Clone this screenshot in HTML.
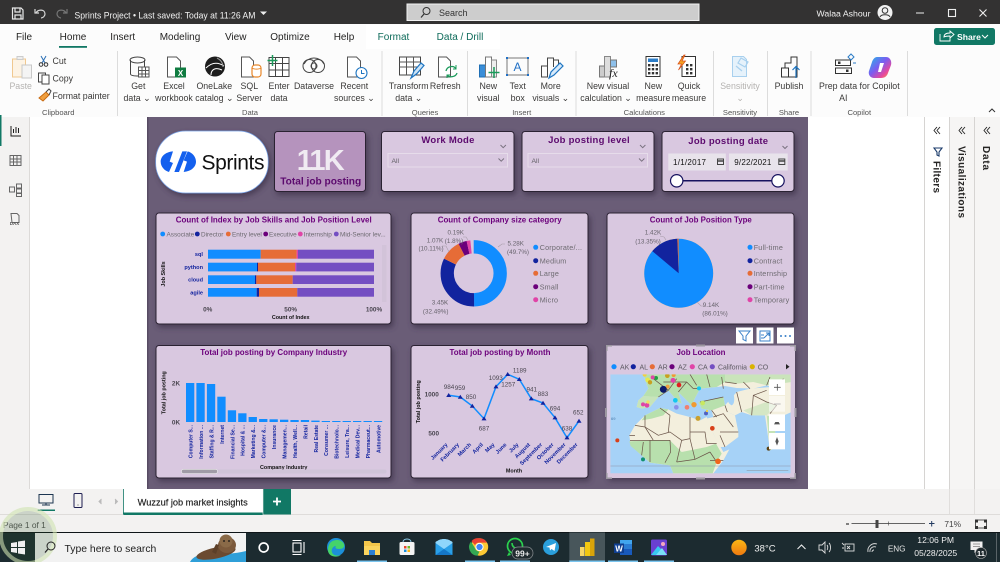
<!DOCTYPE html>
<html><head><meta charset="utf-8"><title>Sprints Project</title>
<style>
html,body{margin:0;padding:0;width:1000px;height:562px;overflow:hidden;background:#fff}
svg{display:block;font-family:"Liberation Sans",sans-serif}
.m{text-anchor:middle}.e{text-anchor:end}
.r{font-size:8.8px;fill:#3b3a39;text-anchor:middle}
.g{font-size:7.6px;fill:#555;text-anchor:middle}
.tab{font-size:10px;fill:#252423;text-anchor:middle}
.t{font-size:8px;font-weight:bold;fill:#6b007b;text-anchor:middle}
.st{font-size:9.5px;font-weight:bold;fill:#5c0a6e;text-anchor:middle;letter-spacing:.25px}
.lg{font-size:6.4px;fill:#6d6a70}
.lg2{font-size:7.2px;fill:#6d6a70;letter-spacing:.2px}
.lg3{font-size:7px;fill:#5d5a62}
.dl{font-size:6.3px;fill:#67636c;text-anchor:middle}
.ax{font-size:5.6px;font-weight:bold;fill:#12239e}
.ax2{font-size:5.1px;font-weight:bold;fill:#12239e}
.at{font-size:5.4px;font-weight:bold;fill:#111}
.vl{font-size:6.4px;fill:#4a4650;text-anchor:middle;font-weight:bold}
.tb{font-size:9.5px;fill:#eee}
</style></head><body>
<svg width="1000" height="562" viewBox="0 0 1000 562" xmlns="http://www.w3.org/2000/svg">
<defs>
<filter id="s" x="-10%" y="-10%" width="125%" height="130%"><feDropShadow dx="2" dy="3" stdDeviation="3" flood-color="#3c3049" flood-opacity=".75"/></filter>
<clipPath id="mc"><rect x="1" y="7" width="541" height="297"/></clipPath>
<linearGradient id="cp" x1="0" y1="0" x2="1" y2="1"><stop offset="0" stop-color="#22b8e8"/><stop offset=".45" stop-color="#7b5cf0"/><stop offset=".75" stop-color="#e8489c"/><stop offset="1" stop-color="#f7b32b"/></linearGradient>
<linearGradient id="sun" x1="0" y1="0" x2="0" y2="1"><stop offset="0" stop-color="#fbb615"/><stop offset="1" stop-color="#f07a10"/></linearGradient>
</defs>

<!-- base -->
<rect width="1000" height="562" fill="#fff"/>
<rect y="0" width="1000" height="24.5" fill="#333232"/>
<rect y="24" width="1000" height="93" fill="#fcfcfc"/>
<rect x="366" y="25" width="58" height="24" fill="#fff"/><rect x="424" y="25" width="76" height="24" fill="#fff"/>
<rect y="117" width="30" height="372" fill="#f3f2f1"/>
<rect x="29" y="117" width="1" height="372" fill="#dcdad8"/>
<rect x="0" y="115" width="1.5" height="31" fill="#117865"/>
<rect x="925" y="117" width="75" height="372" fill="#f6f5f4"/>
<rect x="925" y="117" width="24" height="372" fill="#fff"/>
<rect x="924" y="117" width="1" height="372" fill="#d6d4d2"/><rect x="949" y="117" width="1" height="372" fill="#d6d4d2"/><rect x="974" y="117" width="1" height="372" fill="#d6d4d2"/>
<rect y="489" width="1000" height="43" fill="#f3f2f1"/>
<rect y="514" width="1000" height="1" fill="#dedcda"/>

<!-- title bar -->
<g fill="none" stroke="#e8e8e8" stroke-width="1.2"><path d="M12.5 8h8.5l2 2v9h-10.500z"/><path d="M15 8v4h5V8M15 19v-4h6v4"/></g>
<path d="M35 9v4h4M36 13c2-4 9-4 9 1 0 2-2 4-4 4" fill="none" stroke="#d8d8d8" stroke-width="1.2"/>
<path d="M67 9v4h-4M66 13c-2-4-9-4-9 1 0 2 2 4 4 4" fill="none" stroke="#777" stroke-width="1.2"/>
<text x="74.500" y="18.500" font-size="8.800" fill="#f2f2f2" textLength="181" lengthAdjust="spacingAndGlyphs">Sprints Project  •  Last saved: Today at 11:26 AM</text>
<path d="M260 11.500h7l-3.500 3.500z" fill="#eee"/>
<rect x="407" y="4" width="292" height="16.500" fill="#cdcdcd" stroke="#f2f2f2" stroke-width="1"/>
<circle cx="426.500" cy="11" r="3.500" fill="none" stroke="#333" stroke-width="1"/><path d="M424 14l-3 3.500" stroke="#333" stroke-width="1.200"/>
<text x="439" y="16" font-size="9" fill="#333">Search</text>
<text x="816.500" y="16.500" font-size="8.600" fill="#f4f4f4" textLength="54" lengthAdjust="spacingAndGlyphs">Walaa Ashour</text>
<circle cx="885" cy="12.500" r="7.500" fill="#f2f2f2"/><circle cx="885" cy="10.500" r="2.800" fill="none" stroke="#333"/><path d="M880 17c1-3 9-3 10 0" fill="none" stroke="#333"/>
<path d="M916 13h8" stroke="#eee"/><rect x="948.500" y="9.500" width="7" height="7" fill="none" stroke="#eee" stroke-width="1.100"/><path d="M979.500 9.500l7 7M986.500 9.500l-7 7" stroke="#eee" stroke-width="1.100"/>

<!-- tabs -->
<text class="tab" x="24" y="40">File</text><text class="tab" x="73" y="40">Home</text><text class="tab" x="122.700" y="40">Insert</text><text class="tab" x="180" y="40">Modeling</text><text class="tab" x="235.700" y="40">View</text><text class="tab" x="290" y="40">Optimize</text><text class="tab" x="344" y="40">Help</text>
<text class="tab" x="393.500" y="40" style="fill:#0e6b5a">Format</text><text class="tab" x="460" y="40" style="fill:#0e6b5a">Data / Drill</text>
<rect x="59" y="46" width="28" height="1.800" fill="#117865"/>
<rect x="934" y="28" width="61" height="17" rx="2.500" fill="#117865"/>
<path d="M940 34v7h10v-3M944 37c0-3 3-4 6-4v-2l4 3.500-4 3.500v-2c-2 0-4 0-6 1z" fill="none" stroke="#fff" stroke-width=".9"/>
<text x="957" y="40" font-size="8.600" font-weight="bold" fill="#fff">Share</text><path d="M982 35l3 3 3-3" fill="none" stroke="#fff"/>

<!-- separators -->
<g fill="#dcdcdc"><rect x="117" y="51" width="1" height="65"/><rect x="381.500" y="51" width="1" height="65"/><rect x="467" y="51" width="1" height="65"/><rect x="575.500" y="51" width="1" height="65"/><rect x="713" y="51" width="1" height="65"/><rect x="767" y="51" width="1" height="65"/><rect x="810.500" y="51" width="1" height="65"/><rect x="907" y="51" width="1" height="65"/></g>

<!-- ribbon labels -->
<text class="r" x="20.700" y="89" style="fill:#b5b3b1">Paste</text>
<text class="r" x="52.500" y="64" style="text-anchor:start">Cut</text><text class="r" x="52.500" y="81.500" style="text-anchor:start">Copy</text><text class="r" x="52.500" y="99" style="text-anchor:start">Format painter</text>
<text class="r" x="138.300" y="89">Get</text><text class="r" x="137" y="101">data ⌄</text>
<text class="r" x="174" y="89">Excel</text><text class="r" x="174" y="101">workbook</text>
<text class="r" x="214.300" y="89">OneLake</text><text class="r" x="214.300" y="101">catalog ⌄</text>
<text class="r" x="249.300" y="89">SQL</text><text class="r" x="249.300" y="101">Server</text>
<text class="r" x="279" y="89">Enter</text><text class="r" x="279" y="101">data</text>
<text class="r" x="314" y="89">Dataverse</text>
<text class="r" x="354.300" y="89">Recent</text><text class="r" x="354.300" y="101">sources ⌄</text>
<text class="r" x="408.700" y="89">Transform</text><text class="r" x="408.700" y="101">data ⌄</text>
<text class="r" x="445.300" y="89">Refresh</text>
<text class="r" x="488.300" y="89">New</text><text class="r" x="488.300" y="101">visual</text>
<text class="r" x="517.700" y="89">Text</text><text class="r" x="517.700" y="101">box</text>
<text class="r" x="550.700" y="89">More</text><text class="r" x="550.700" y="101">visuals ⌄</text>
<text class="r" x="608" y="89">New visual</text><text class="r" x="606" y="101">calculation ⌄</text>
<text class="r" x="653.300" y="89">New</text><text class="r" x="653.300" y="101">measure</text>
<text class="r" x="689" y="89">Quick</text><text class="r" x="689" y="101">measure</text>
<text class="r" x="740" y="89" style="fill:#b5b3b1">Sensitivity</text><text class="r" x="740" y="101" style="fill:#b5b3b1">⌄</text>
<text class="r" x="789" y="89">Publish</text>
<text class="r" x="859.300" y="89">Prep data for Copilot</text><text class="r" x="843.300" y="101">AI</text>
<text class="g" x="58.300" y="115">Clipboard</text><text class="g" x="250" y="115">Data</text><text class="g" x="425" y="115">Queries</text><text class="g" x="521.700" y="115">Insert</text><text class="g" x="644.300" y="115">Calculations</text><text class="g" x="740" y="115">Sensitivity</text><text class="g" x="789" y="115">Share</text><text class="g" x="859.300" y="115">Copilot</text>
<path d="M989 112l3-3 3 3" fill="none" stroke="#333"/>

<!-- ribbon icons -->
<g fill="none" stroke-width="1">
<rect x="12.500" y="59" width="13" height="18" fill="#fdf3e4" stroke="#f0c890"/><rect x="17" y="56.500" width="6" height="3" fill="#eee" stroke="#ccc"/><rect x="22" y="65" width="9.500" height="13" fill="#f4f4f4" stroke="#c8c8c8"/>
<path d="M41 56l4 7M46 56l-4 7" stroke="#2a6fb5"/><circle cx="41" cy="64.500" r="1.800" stroke="#333"/><circle cx="46" cy="64.500" r="1.800" stroke="#333"/>
<rect x="38.500" y="73" width="7" height="9" stroke="#444"/><rect x="42" y="75" width="7" height="9" fill="#fff" stroke="#444"/>
<path d="M39 98l7-6 3 3-6 6z" fill="#f0a040" stroke="#c86a10"/><path d="M46 92l3-3 2 2-2 4" stroke="#444"/>
<path d="M130.500 60v14c0 2.500 12 2.500 14 1V60" stroke="#444"/><ellipse cx="137.500" cy="60" rx="7.500" ry="3" stroke="#444"/><rect x="138.500" y="67" width="10.500" height="10" fill="#fff" stroke="#555"/><path d="M138.500 70.500h10.500M138.500 74h10.500M142 67v10M145.500 67v10" stroke="#555"/>
<path d="M167.500 57h9l4 4v16h-13z" fill="#fff" stroke="#555"/><rect x="175" y="67.500" width="11" height="10" fill="#107c41" stroke="none"/><text x="180.500" y="76" font-size="8" font-weight="bold" fill="#fff" text-anchor="middle">X</text>
<circle cx="215" cy="66.500" r="10" fill="#1d1d1d"/><path d="M206 68c6-6 12-6 18-2M211 75c0-6 5-8 11-5" stroke="#fff"/><path d="M217 58c4 2 6 5 6 9" stroke="#999"/>
<path d="M241.500 57h8l4 4v16h-12z" fill="#fff" stroke="#555"/><rect x="252" y="65" width="9" height="12" rx="3" fill="#fff" stroke="#e8872a" stroke-width="1.200"/><path d="M252 68c2 1.500 7 1.500 9 0" stroke="#e8872a"/>
<rect x="269" y="57.500" width="20" height="19" stroke="#444" fill="#fff"/><path d="M269 63.500h20M269 70h20M275.500 57.500v19M282.500 57.500v19" stroke="#444"/><path d="M272.500 55v11M267.500 60.500h10" stroke="#1a9a5a" stroke-width="1.500"/>
<circle cx="309.500" cy="66" r="6.500" stroke="#444"/><circle cx="318" cy="66" r="6.500" stroke="#444"/><circle cx="314" cy="66" r="3" stroke="#444"/><path d="M304 64c4-8 16-8 20 0" stroke="#444"/>
<path d="M347.500 57h9l4 4v16h-13z" fill="#fff" stroke="#555"/><circle cx="361.500" cy="73" r="5.500" fill="#fff" stroke="#1f76c2" stroke-width="1.100"/><path d="M361.500 70v3.500h3" stroke="#1f76c2"/>
<rect x="399.500" y="57" width="21" height="18" stroke="#444" fill="#fff"/><path d="M399.500 62h21M399.500 67h21M406.500 57v18M413.500 57v18" stroke="#555"/><path d="M411 78l3-7 7-8 3 2.500-7 8z" fill="#cde4f7" stroke="#1f76c2" stroke-width="1.200"/>
<path d="M438.500 57h8l4 4v16h-12z" fill="#fff" stroke="#555"/><path d="M446 71c1-5 8-6 10-2M457 73c-1 4-8 5-10 2" stroke="#1a9a5a" stroke-width="1.300"/><path d="M456 65v4h-3M447 78v-3h3" stroke="#1a9a5a"/>
<rect x="479.500" y="65" width="6" height="12" fill="#3a8ed8" stroke="#1f6fb5"/><rect x="485.500" y="57" width="6" height="20" fill="#fff" stroke="#777"/><rect x="491.500" y="60" width="5" height="17" fill="#eee" stroke="#888"/><path d="M494 67v11M488.500 72.500h11" stroke="#1a9a5a" stroke-width="1.500"/>
<rect x="507" y="58" width="21" height="17" stroke="#777"/><g fill="#1f6fc5" stroke="none"><rect x="506" y="57" width="2" height="2"/><rect x="527" y="57" width="2" height="2"/><rect x="506" y="74" width="2" height="2"/><rect x="527" y="74" width="2" height="2"/></g><text x="517.500" y="71" font-size="12" fill="#1f6fc5" text-anchor="middle" stroke="none">A</text>
<path d="M541.500 66v11h6V66zM547.500 77V58h6v9M553.500 60h5v5" stroke="#444"/><path d="M549 78l2-6 9-9 3 3-9 9z" fill="#d8eafa" stroke="#1f76c2" stroke-width="1.200"/>
<rect x="599.500" y="66" width="5" height="11" fill="#ccc" stroke="#777"/><rect x="604.500" y="56.500" width="6" height="20.500" fill="#ddd" stroke="#888"/><rect x="610.500" y="60" width="6" height="7" fill="#8ec0ea" stroke="#777"/><text x="609" y="77" font-size="12" font-family="Liberation Serif" font-style="italic" fill="#222" stroke="none">fx</text>
<rect x="646" y="56.500" width="14" height="20" fill="#fff" stroke="#333"/><rect x="648" y="58.500" width="10" height="3.500" fill="#2b7cc7" stroke="none"/><g fill="#333" stroke="none"><rect x="648" y="64" width="2.400" height="2.400"/><rect x="651.800" y="64" width="2.400" height="2.400"/><rect x="655.600" y="64" width="2.400" height="2.400"/><rect x="648" y="68" width="2.400" height="2.400"/><rect x="651.800" y="68" width="2.400" height="2.400"/><rect x="655.600" y="68" width="2.400" height="2.400"/><rect x="648" y="72" width="2.400" height="2.400"/><rect x="651.800" y="72" width="2.400" height="2.400"/><rect x="655.600" y="72" width="2.400" height="2.400"/></g>
<rect x="682" y="56.500" width="13.500" height="20" fill="#fff" stroke="#333"/><g fill="#333" stroke="none"><rect x="686" y="64" width="2.400" height="2.400"/><rect x="690" y="64" width="2.400" height="2.400"/><rect x="686" y="68" width="2.400" height="2.400"/><rect x="690" y="68" width="2.400" height="2.400"/><rect x="686" y="72" width="2.400" height="2.400"/><rect x="690" y="72" width="2.400" height="2.400"/></g><path d="M684 55l-6 9h3.500l-3 6 7-9h-3.500l3-6z" fill="#f5a623" stroke="#d9541e" stroke-width=".8"/>
<path d="M732.500 56.500h11l3 3v17h-14z" fill="#e6f2fb" stroke="#a8d0ee"/><path d="M741 58l7 4-3 5-7-4zM736 66l6 5" stroke="#a8d0ee" stroke-width="1.200"/>
<path d="M781.500 68h7v9h-7zM785 68v-5h6v-6h6v20h-8" stroke="#333"/><path d="M796 78v-11M792.500 70l3.500-3.500 3.500 3.500" stroke="#1f76c2" stroke-width="1.200"/>
<rect x="835.500" y="60" width="15" height="5.500" stroke="#333"/><rect x="835.500" y="68" width="16" height="5.500" stroke="#333"/><rect x="838" y="61.500" width="2.500" height="2.500" fill="#333"/><rect x="846" y="69.500" width="2.500" height="2.500" fill="#333"/><path d="M848 57l3-3 3 3-3 3zM853 63h3" stroke="#2b7cc7"/>
<path d="M877 57h9c4 0 6 4 5 8l-3 8c-1 3-3 5-7 5h-7c-4 0-6-4-5-7l3-9c1-3 3-5 5-5z" fill="url(#cp)" stroke="none"/><path d="M880 63l4 0-3 9h-3z" fill="#fff" stroke="none"/>
</g>

<!-- left pane -->
<g fill="none" stroke="#1c1c1c" stroke-width="1"><path d="M11 126v10h10M13.500 133v-4M16 133v-6M18.500 133v-5"/></g>
<g fill="none" stroke="#666"><rect x="10" y="155.500" width="11" height="10"/><path d="M10 159h11M10 162h11M13.500 155.500v10M17 155.500v10"/><rect x="16.500" y="184" width="5" height="4"/><rect x="16.500" y="189" width="5" height="4"/><rect x="16.500" y="193.500" width="5" height="3"/><rect x="9.500" y="187" width="5" height="5"/><path d="M11 213.500h6l2 2v7h-7z"/></g>
<text x="14.500" y="225" font-size="4.500" fill="#555" text-anchor="middle" font-weight="bold">DAX</text>

<!-- right panes -->
<g fill="none" stroke="#222" stroke-width=".9"><path d="M937 127l-3 3.500 3 3.500M940 127l-3 3.500 3 3.500M962 127l-3 3.500 3 3.500M965 127l-3 3.500 3 3.500M987 127l-3 3.500 3 3.500M990 127l-3 3.500 3 3.500"/><path d="M934 148h8l-3 4v4l-2-1v-3z" stroke="#1a3a6a" stroke-width="1.100"/></g>
<text transform="translate(933.500,161) rotate(90)" font-size="10" font-weight="bold" fill="#252423" textLength="32">Filters</text>
<text transform="translate(958.500,146) rotate(90)" font-size="10" font-weight="bold" fill="#252423" textLength="72">Visualizations</text>
<text transform="translate(983,146) rotate(90)" font-size="10" font-weight="bold" fill="#252423" textLength="24">Data</text>

<!-- canvas -->
<rect x="147" y="117" width="661" height="372" fill="#6a5d77"/>
<rect x="147" y="117" width="1.500" height="372" fill="#574b63"/>

<!-- logo + KPI -->
<rect x="155.700" y="131" width="112.500" height="62" rx="30" fill="#fff" stroke="#7aa4e8" stroke-width=".7" filter="url(#s)"/>
<g transform="translate(145,118) scale(.3333)" fill="#1460ee"><path d="M84 100C60 102 47 116 47 131c0 15 12 28 25 31L84 135l-10-4 10-31z"/><path d="M112 100l14 0-24 62-14 0z"/><path d="M116 162c24-2 37-16 37-31 0-15-12-28-25-31L116 127l10 4-10 31z"/></g>
<text x="201.500" y="169.500" font-size="21" fill="#111" textLength="63">Sprints</text>
<rect x="274.500" y="131.500" width="91" height="60" rx="3" fill="#b593bd" stroke="#2c2233" filter="url(#s)"/>
<text x="320.700" y="170" font-size="29" font-weight="bold" fill="#f0ebf2" text-anchor="middle" textLength="48">11K</text>
<text x="320.700" y="184.500" font-size="10.500" font-weight="bold" fill="#5c0a6e" text-anchor="middle" textLength="81" lengthAdjust="spacingAndGlyphs">Total job posting</text>

<!-- slicers -->
<g filter="url(#s)" fill="#d9c8e0" stroke="#2c2233"><rect x="381.500" y="131.500" width="132.500" height="60" rx="3"/><rect x="522" y="131.500" width="132" height="60" rx="3"/><rect x="662" y="131.500" width="132" height="60" rx="3"/></g>
<text class="st" x="448" y="143">Work Mode</text><text class="st" x="589" y="143">Job posting level</text><text class="st" x="728.300" y="144">Job posting date</text>
<g fill="none"><rect x="388" y="153.500" width="119.500" height="13.500" stroke="#e6dcea"/><rect x="528" y="153.500" width="119.500" height="13.500" stroke="#e6dcea"/>
<path d="M498.500 158.500l2.700 2.700 2.700-2.700M639 158.500l2.700 2.700 2.700-2.700M500.500 145l2.700 2.700 2.700-2.700M640 145l2.700 2.700 2.700-2.700M782.500 146l2.500 2.500 2.500-2.500" stroke="#7a7280"/></g>
<text x="391.500" y="163" font-size="6.800" fill="#605e64">All</text><text x="531.500" y="163" font-size="6.800" fill="#605e64">All</text>
<rect x="668.300" y="153.500" width="57.500" height="17" fill="#e8e3eb"/><rect x="729" y="153.500" width="58.700" height="17" fill="#e8e3eb"/>
<text x="673" y="165" font-size="8" fill="#111" textLength="33">1/1/2017</text><text x="734.300" y="165" font-size="8" fill="#111" textLength="37">9/22/2021</text>
<g fill="none" stroke="#444"><rect x="717.500" y="159" width="6" height="5.500"/><rect x="778.800" y="159" width="6" height="5.500"/><path d="M717.500 161h6M778.800 161h6" stroke-width="1.500"/></g>
<path d="M677 180.800h101" stroke="#17125f" stroke-width="1.500"/>
<circle cx="676.700" cy="180.800" r="6.200" fill="#fff" stroke="#17125f" stroke-width="1.200"/><circle cx="778" cy="180.800" r="6.200" fill="#fff" stroke="#17125f" stroke-width="1.200"/>

<!-- cards -->
<g filter="url(#s)" fill="#d9c8e0" stroke="#2c2233"><rect x="156" y="213" width="235" height="111" rx="3"/><rect x="411" y="213" width="177" height="111" rx="3"/><rect x="607" y="213" width="187" height="111" rx="3"/><rect x="156" y="345.500" width="235" height="132.500" rx="3"/><rect x="411" y="345.500" width="177" height="132.500" rx="3"/></g>
<text class="t" x="273.700" y="222.500" textLength="196" lengthAdjust="spacingAndGlyphs">Count of Index by Job Skills and Job Position Level</text>
<text class="t" x="499.700" y="222.500" textLength="124" lengthAdjust="spacingAndGlyphs">Count of Company size category</text>
<text class="t" x="700.800" y="222.500" textLength="102" lengthAdjust="spacingAndGlyphs">Count of Job Position Type</text>
<text class="t" x="273.700" y="355" textLength="147" lengthAdjust="spacingAndGlyphs">Total job posting by Company Industry</text>
<text class="t" x="500" y="355" textLength="101" lengthAdjust="spacingAndGlyphs">Total job posting by Month</text>

<!-- card 1 -->
<g><circle cx="162.700" cy="234" r="2.400" fill="#118dff"/><circle cx="197.300" cy="234" r="2.400" fill="#12239e"/><circle cx="228.300" cy="234" r="2.400" fill="#e66c37"/><circle cx="265.700" cy="234" r="2.400" fill="#6b007b"/><circle cx="300.300" cy="234" r="2.400" fill="#e044a7"/><circle cx="336.300" cy="234" r="2.400" fill="#744ec2"/></g>
<text class="lg" x="166.500" y="236.300">Associate</text><text class="lg" x="201" y="236.300">Director</text><text class="lg" x="232" y="236.300">Entry level</text><text class="lg" x="269" y="236.300">Executive</text><text class="lg" x="303.700" y="236.300">Internship</text><text class="lg" x="340" y="236.300">Mid-Senior lev...</text>
<g>
<rect x="208" y="249.700" width="52.700" height="9" fill="#118dff"/><rect x="260.700" y="249.700" width="36" height="9" fill="#e66c37"/><rect x="296.700" y="249.700" width="1.300" height="9" fill="#e044a7"/><rect x="298" y="249.700" width="76" height="9" fill="#744ec2"/>
<rect x="208" y="262.700" width="49" height="8.700" fill="#118dff"/><rect x="257" y="262.700" width="1" height="8.700" fill="#12239e"/><rect x="258" y="262.700" width="37" height="8.700" fill="#e66c37"/><rect x="295" y="262.700" width="1.200" height="8.700" fill="#e044a7"/><rect x="296.200" y="262.700" width="77.800" height="8.700" fill="#744ec2"/>
<rect x="208" y="275.300" width="47" height="8.700" fill="#118dff"/><rect x="255" y="275.300" width="1.300" height="8.700" fill="#12239e"/><rect x="256.300" y="275.300" width="36.400" height="8.700" fill="#e66c37"/><rect x="292.700" y="275.300" width="81.300" height="8.700" fill="#744ec2"/>
<rect x="208" y="288" width="48.700" height="8.700" fill="#118dff"/><rect x="256.700" y="288" width="2.300" height="8.700" fill="#12239e"/><rect x="259" y="288" width="38.300" height="8.700" fill="#e66c37"/><rect x="297.300" y="288" width="76.700" height="8.700" fill="#744ec2"/>
</g>
<rect x="382" y="245" width="4.500" height="57" fill="#d2c3d9"/>
<text class="ax e" x="203" y="256">sql</text><text class="ax e" x="203" y="269">python</text><text class="ax e" x="203" y="281.500">cloud</text><text class="ax e" x="203" y="294.500">agile</text>
<text class="at m" transform="translate(165,274) rotate(-90)">Job Skills</text>
<text class="vl" x="207.700" y="311.500">0%</text><text class="vl" x="290.700" y="311.500">50%</text><text class="vl" x="374" y="311.500">100%</text>
<text class="at m" x="290.700" y="319">Count of Index</text>

<!-- donut -->
<g fill="none" stroke-width="13.300" transform="rotate(-90 473.700 273.300)">
<circle cx="473.700" cy="273.300" r="26.500" stroke="#118dff" stroke-dasharray="82.750 166.500"/>
<circle cx="473.700" cy="273.300" r="26.500" stroke="#12239e" stroke-dasharray="54.100 166.500" stroke-dashoffset="-82.750"/>
<circle cx="473.700" cy="273.300" r="26.500" stroke="#e66c37" stroke-dasharray="16.830 166.500" stroke-dashoffset="-136.850"/>
<circle cx="473.700" cy="273.300" r="26.500" stroke="#6b007b" stroke-dasharray="6.830 166.500" stroke-dashoffset="-153.680"/>
<circle cx="473.700" cy="273.300" r="26.500" stroke="#e044a7" stroke-dasharray="3 166.500" stroke-dashoffset="-160.500"/>
</g>
<g fill="none" stroke="#a89ca9" stroke-width=".6"><path d="M498 247l4-3h3M468 240l-2-3h-3M449 252l-3-6h-4M447 304l-2-2h-1"/></g>
<text class="dl" x="515.700" y="245.500">5.28K</text><text class="dl" x="518" y="254">(49.7%)</text>
<text class="dl" x="455.700" y="234.500">0.19K</text><text class="dl" x="454" y="243">(1.8%)</text>
<text class="dl" x="435" y="242.500">1.07K</text><text class="dl" x="431" y="250.500">(10.11%)</text>
<text class="dl" x="440" y="304.500">3.45K</text><text class="dl" x="435.700" y="313.500">(32.49%)</text>
<g><circle cx="535.700" cy="247.300" r="2.500" fill="#118dff"/><circle cx="535.700" cy="260.700" r="2.500" fill="#12239e"/><circle cx="535.700" cy="273.300" r="2.500" fill="#e66c37"/><circle cx="535.700" cy="286.700" r="2.500" fill="#6b007b"/><circle cx="535.700" cy="299.700" r="2.500" fill="#e044a7"/></g>
<text class="lg2" x="539.700" y="250">Corporate/...</text><text class="lg2" x="539.700" y="263.300">Medium</text><text class="lg2" x="539.700" y="276">Large</text><text class="lg2" x="539.700" y="289.400">Small</text><text class="lg2" x="539.700" y="302.400">Micro</text>

<!-- pie -->
<circle cx="678.700" cy="273.300" r="35" fill="#f0c9c0"/>
<circle cx="678.700" cy="273.300" r="34.500" fill="#118dff"/>
<path d="M678.700 273.300L652.300 251.100A34.500 34.500 0 0 1 677.300 238.800z" fill="#12239e"/>
<path d="M678.700 273.300L677.300 238.800A34.500 34.500 0 0 1 678.700 238.800z" fill="#e66c37"/>
<g fill="none" stroke="#a89ca9" stroke-width=".6"><path d="M660 236l4 1 2 3M697 302l4 4h3"/></g>
<text class="dl" x="653" y="234.500">1.42K</text><text class="dl" x="648" y="243.500">(13.35%)</text>
<text class="dl" x="711" y="307">9.14K</text><text class="dl" x="715" y="315.500">(86.01%)</text>
<g><circle cx="750" cy="247.300" r="2.500" fill="#118dff"/><circle cx="750" cy="260.700" r="2.500" fill="#12239e"/><circle cx="750" cy="273.300" r="2.500" fill="#e66c37"/><circle cx="750" cy="286.700" r="2.500" fill="#6b007b"/><circle cx="750" cy="299.700" r="2.500" fill="#e044a7"/></g>
<text class="lg2" x="753.700" y="250">Full-time</text><text class="lg2" x="753.700" y="263.300">Contract</text><text class="lg2" x="753.700" y="276">Internship</text><text class="lg2" x="753.700" y="289.400">Part-time</text><text class="lg2" x="753.700" y="302.400">Temporary</text>

<!-- bars card -->
<text class="vl e" x="176" y="385.500">2K</text><text class="vl e" x="176" y="424.500">0K</text>
<text class="at m" transform="translate(165.500,392.700) rotate(-90)">Total job posting</text>
<g fill="#118dff"><rect x="186" y="383" width="8.300" height="39"/><rect x="196.400" y="383" width="8.300" height="39"/><rect x="206.900" y="384" width="8.300" height="38"/><rect x="217.300" y="396.700" width="8.300" height="25.300"/><rect x="227.800" y="410.300" width="8.300" height="11.700"/><rect x="238.200" y="413.300" width="8.300" height="8.700"/><rect x="248.600" y="417" width="8.300" height="5"/><rect x="259.100" y="419" width="8.300" height="3"/><rect x="269.500" y="419.300" width="8.300" height="2.700"/><rect x="280" y="419.700" width="8.300" height="2.300"/><rect x="290.400" y="420" width="8.300" height="2"/><rect x="300.800" y="420" width="8.300" height="2"/><rect x="311.300" y="420.600" width="8.300" height="1.400"/><rect x="321.700" y="421" width="8.300" height="1"/><rect x="332.200" y="421" width="8.300" height="1"/><rect x="342.600" y="421" width="8.300" height="1"/><rect x="353" y="421" width="8.300" height="1"/><rect x="363.500" y="421" width="8.300" height="1"/><rect x="373.900" y="421" width="8.300" height="1"/></g>
<g class="ax2" text-anchor="end">
<text transform="translate(192.500,425) rotate(-90)">Computer S...</text><text transform="translate(202.900,425) rotate(-90)">Information ...</text><text transform="translate(213.400,425) rotate(-90)">Staffing &amp; R...</text><text transform="translate(223.800,425) rotate(-90)">Internet</text><text transform="translate(234.300,425) rotate(-90)">Financial Se...</text><text transform="translate(244.700,425) rotate(-90)">Hospital &amp; ...</text><text transform="translate(255.100,425) rotate(-90)">Marketing &amp;...</text><text transform="translate(265.600,425) rotate(-90)">Computer &amp;...</text><text transform="translate(276,425) rotate(-90)">Insurance</text><text transform="translate(286.500,425) rotate(-90)">Managemen...</text><text transform="translate(296.900,425) rotate(-90)">Health, Well...</text><text transform="translate(307.300,425) rotate(-90)">Retail</text><text transform="translate(317.800,425) rotate(-90)">Real Estate</text><text transform="translate(328.200,425) rotate(-90)">Consumer ...</text><text transform="translate(338.700,425) rotate(-90)">Biotechnolo...</text><text transform="translate(349.100,425) rotate(-90)">Leisure, Tra...</text><text transform="translate(359.500,425) rotate(-90)">Medical Dev...</text><text transform="translate(370,425) rotate(-90)">Pharmaceut...</text><text transform="translate(380.400,425) rotate(-90)">Automotive</text>
</g>
<text class="at m" x="283.700" y="469">Company Industry</text>
<rect x="181" y="469.500" width="205.500" height="4" rx="2" fill="#d0c4d8"/><rect x="181.500" y="469.300" width="36" height="4.200" rx="2" fill="#a09ba6" stroke="#eee" stroke-width=".6"/>

<!-- line card -->
<text class="vl" x="431.700" y="396.500">1000</text><text class="vl" x="433.700" y="435.500">500</text>
<text class="at m" transform="translate(420,401.700) rotate(-90)">Total job posting</text>
<polyline points="448.700,395.300 460.300,397 472.300,406 484,418.700 496,386.700 507.700,374.300 519.300,379.300 531.300,398.700 543,403 555,417.700 567,437.700 579,421" fill="none" stroke="#118dff" stroke-width="1.500"/>
<g fill="#12239e"><path d="M448.700 393l2.500 4h-5zM460.300 394.700l2.500 4h-5zM472.300 403.700l2.500 4h-5zM484 416.400l2.500 4h-5zM496 384.400l2.500 4h-5zM507.700 372l2.500 4h-5zM519.300 377l2.500 4h-5zM531.300 396.400l2.500 4h-5zM543 400.700l2.500 4h-5zM555 415.400l2.500 4h-5zM567 435.400l2.500 4h-5zM579 418.700l2.500 4h-5z"/></g>
<g class="dl" style="font-size:6.300px;fill:#4a4650">
<text x="449" y="389">984</text><text x="460" y="390">959</text><text x="471" y="399">850</text><text x="484" y="430.500">687</text><text x="495.700" y="380">1093</text><text x="508.300" y="386.500">1257</text><text x="519.700" y="372.500">1189</text><text x="531.700" y="391.500">941</text><text x="543" y="396">883</text><text x="555" y="410.500">694</text><text x="567" y="430.500">638</text><text x="578.300" y="414.300">652</text>
</g>
<g class="ax" text-anchor="end">
<text transform="translate(448,445) rotate(-45)">January</text><text transform="translate(459.500,445) rotate(-45)">February</text><text transform="translate(471.500,445) rotate(-45)">March</text><text transform="translate(483.500,445) rotate(-45)">April</text><text transform="translate(495,445) rotate(-45)">May</text><text transform="translate(507,445) rotate(-45)">June</text><text transform="translate(519,445) rotate(-45)">July</text><text transform="translate(530.500,445) rotate(-45)">August</text><text transform="translate(542.500,445) rotate(-45)">September</text><text transform="translate(554,445) rotate(-45)">October</text><text transform="translate(566,445) rotate(-45)">November</text><text transform="translate(578,445) rotate(-45)">December</text>
</g>
<text class="at m" x="514" y="472.500">Month</text>

<!-- map card -->
<rect x="606.500" y="345.500" width="188.500" height="132.500" fill="#d9c8e0" filter="url(#s)"/>
<text class="t" x="701" y="355" textLength="49" lengthAdjust="spacingAndGlyphs">Job Location</text>
<g><circle cx="614" cy="366.700" r="2.600" fill="#118dff"/><circle cx="633.300" cy="366.700" r="2.600" fill="#12239e"/><circle cx="652.300" cy="366.700" r="2.600" fill="#e66c37"/><circle cx="672" cy="366.700" r="2.600" fill="#6b007b"/><circle cx="692.300" cy="366.700" r="2.600" fill="#e044a7"/><circle cx="712.300" cy="366.700" r="2.600" fill="#744ec2"/><circle cx="752.300" cy="366.700" r="2.600" fill="#d9b300"/></g>
<g class="lg3"><text x="620" y="369.500">AK</text><text x="639.500" y="369.500">AL</text><text x="658" y="369.500">AR</text><text x="678" y="369.500">AZ</text><text x="698" y="369.500">CA</text><text x="718" y="369.500" textLength="29" lengthAdjust="spacingAndGlyphs">California</text><text x="757.700" y="369.500">CO</text></g>
<path d="M786 364l3.500 2.700-3.500 2.700z" fill="#222"/>
<g transform="translate(610,372) scale(.33333)" clip-path="url(#mc)">
<rect x="1" y="7" width="541" height="297" fill="#a6d2f7"/>
<g fill="#f3efdd">
<path d="M100 7H545V42L500 50 470 40 430 50 380 48 345 42 320 45 270 50 255 78 245 100 225 80 205 60 215 95 205 90 175 55 145 75 100 72 115 50z"/>
<path d="M85 85L100 72 145 75 120 105 95 110 80 105z"/>
<path d="M58 190L75 160 105 130 150 108 175 112 200 125 240 135 270 145 290 135 310 185 340 240 358 232 340 265 310 304 190 304 180 280 120 272 95 250 62 220z"/>
<path d="M265 90L340 75 345 100 305 115 275 110z"/>
<path d="M310 135L305 115 345 100 352 120 375 130 385 180 385 195 345 225 330 225 300 165 290 140z"/>
<path d="M345 100L380 60 420 50 545 40V120L500 140 490 230 480 235 465 130 425 130 395 120 375 130 352 120z"/>
</g>
<g fill="#b8e0ad">
<path d="M100 7H345V30L320 45 270 50 255 78 245 100 225 80 205 60 215 95 205 90 175 55 145 75 100 72 115 50z"/>
<path d="M85 85L100 72 145 75 120 105 95 110 80 105z" opacity=".75"/>
<path d="M265 90L340 75 345 100 305 115 275 110z"/>
<path d="M58 208L130 205 180 205 215 240 290 225 318 215 335 245 320 270 308 304 190 304 180 280 120 272 95 250 62 222z"/>
<path d="M105 130L150 108 175 112 160 130 125 140 95 145z"/>
<path d="M345 7H545V30L470 40 430 30 380 35 345 30z" opacity=".7"/>
<path d="M470 130L500 140 490 230 480 235z" opacity=".8"/>
<path d="M400 115L470 90 500 100 470 130 425 130z" opacity=".5"/>
</g>
<path d="M350 50C345 70 352 95 365 100 378 95 372 62 365 48z" fill="#a6d2f7"/>
<g fill="none" stroke="#6a5448" stroke-width="2.200" stroke-linejoin="round">
<path d="M75 160L105 165 130 205 60 205M105 165L145 190 180 180 215 205 240 200 240 180 285 180 290 215 320 215M180 130L175 180M240 135V180M215 205L200 270M130 205L180 205 182 240 165 272M100 210L95 250M120 205V270M240 200L255 262 300 240M300 240L320 270M340 265L300 265M200 270L255 262"/>
<path d="M105 130L105 165M150 108L180 130M58 190H75"/>
<path d="M310 135L340 125 370 165M330 180L385 180M345 225L330 190M345 100L352 120M305 115L320 135"/>
<path d="M380 60L395 120M425 130L430 70 470 55M470 90L500 100 480 125M430 70L470 90M420 50L400 30M470 40L480 15M380 35L345 30M500 50L520 20"/>
<path d="M145 75L175 55 200 20M205 60L230 30 250 50M250 50L270 50M160 30L230 30M240 7L260 40M290 7L300 45M130 20L175 55M340 50L335 15M270 90L340 75"/>
</g>
<path d="M1 282H542" stroke="#8c93a8" stroke-width="3" opacity=".5"/>
<rect x="410" y="294" width="125" height="3" fill="#8d94a0" opacity=".55"/>
<g>
<circle cx="113" cy="24" r="7" fill="#e8e84a"/><circle cx="120" cy="31" r="6.500" fill="#c8a020"/><circle cx="104" cy="8" r="6" fill="#f0d040"/><circle cx="138" cy="18" r="6" fill="#20a040"/><circle cx="128" cy="16" r="6" fill="#e044a7"/><circle cx="172" cy="11" r="7" fill="#c8a020"/><circle cx="191" cy="9" r="6" fill="#f09a30"/><circle cx="189" cy="25" r="7.500" fill="#e044a7"/><circle cx="207" cy="39" r="7" fill="#e02020"/><circle cx="173" cy="44" r="6" fill="#f0a040"/>
<circle cx="160" cy="52" r="10.500" fill="#0d1a6a"/><circle cx="267" cy="49" r="6" fill="#15c8f0"/>
<circle cx="99" cy="97" r="6" fill="#e044a7"/><circle cx="111" cy="100" r="7" fill="#e044a7"/><circle cx="114" cy="90" r="5" fill="#f4e060"/>
<circle cx="196" cy="85" r="7" fill="#12c8f0"/><circle cx="199" cy="106" r="7" fill="#8a90e8"/><circle cx="231" cy="106" r="7" fill="#f08070"/><circle cx="252" cy="98" r="8" fill="#f09a30"/><circle cx="278" cy="93" r="7" fill="#c8e860"/>
<circle cx="288" cy="124" r="6" fill="#5060c0"/><circle cx="291" cy="117" r="3.500" fill="#f0d040"/><circle cx="264" cy="139" r="7.500" fill="#c8a030"/><circle cx="307" cy="169" r="7" fill="#d8401a"/><circle cx="22" cy="205" r="6" fill="#d8401a"/><circle cx="99" cy="262" r="6" fill="#109070"/><circle cx="324" cy="268" r="8.500" fill="#f0651a"/><circle cx="476" cy="230" r="6" fill="#5a4010"/>
</g>
<g fill="#fff"><rect x="477" y="22" width="48" height="47"/><rect x="477" y="72" width="48" height="47" opacity=".55"/><rect x="477" y="127" width="48" height="50"/><rect x="477" y="183" width="48" height="49"/></g>
<path d="M492 46h20M502 36v20" stroke="#555" stroke-width="2.500"/><path d="M492 96h20" stroke="#aaa" stroke-width="2.500"/>
<path d="M492 157l4-7h10l4 7z" fill="#555"/><path d="M501 195l-5 13 5 13 5-13z" fill="#555"/>
</g>
<text x="611" y="420" font-size="4" fill="#4878a8">69</text>
<!-- handles -->
<g fill="#9c98a0"><path d="M606 345h6v1.500h-4.500v4.500H606zM796 345h-6v1.500h4.500v4.500h1.500zM606 479h6v-1.500h-4.500V473H606zM796 479h-6v-1.500h4.500V473h1.500z"/><rect x="696" y="344.500" width="9" height="2"/><rect x="696" y="477.500" width="9" height="2"/><rect x="605" y="408" width="2" height="9"/><rect x="794.500" y="408" width="2" height="9"/></g>
<!-- visual header -->
<g fill="#fff"><rect x="736" y="327.500" width="17" height="16"/><rect x="756.500" y="327.500" width="17" height="16"/><rect x="777" y="327.500" width="17" height="16"/></g>
<path d="M739 331h11l-4 5v5l-3-1.500V336z" fill="none" stroke="#3a80c8" stroke-width="1"/>
<path d="M760 331h10v10h-10zM764 338l5-5M766 333h3v3M761 335h3M761 338h3" fill="none" stroke="#3a80c8"/>
<g fill="#3a80c8"><circle cx="781" cy="336" r="1"/><circle cx="785.500" cy="336" r="1"/><circle cx="790" cy="336" r="1"/></g>

<!-- page tabs -->
<rect x="39" y="494.500" width="14" height="8.500" fill="none" stroke="#1c3550" stroke-width="1"/><path d="M42 505h8M46 503v2" stroke="#1c3550"/><rect x="37.700" y="509.500" width="17.300" height="1.500" fill="#117865"/>
<rect x="74" y="493.500" width="8" height="14" rx="1" fill="none" stroke="#1c1c50"/><circle cx="78" cy="505" r=".5" fill="#222"/>
<path d="M101.500 499l-2.500 2.500 2.500 2.500" fill="#bbb" stroke="#bbb"/><path d="M115 499l2.500 2.500-2.500 2.500" fill="#bbb" stroke="#bbb"/>
<rect x="123.300" y="489" width="139.400" height="25.500" fill="#fff"/><rect x="123.300" y="512.500" width="139.400" height="2.500" fill="#117865"/><rect x="123" y="489" width=".8" height="25" fill="#117865"/>
<text x="192.700" y="505.500" font-size="8.800" fill="#1c1c1c" text-anchor="middle" textLength="110" lengthAdjust="spacingAndGlyphs" stroke="#1c1c1c" stroke-width=".15">Wuzzuf job market insights</text>
<rect x="263.300" y="489" width="27.700" height="25.500" fill="#117865"/><path d="M277 497.500v8M273 501.500h8" stroke="#fff" stroke-width="1.800"/>
<rect x="949" y="489" width="1" height="25" fill="#e0dedc"/><rect x="974" y="489" width="1" height="25" fill="#e0dedc"/>

<!-- status -->
<text x="3" y="528" font-size="8.400" fill="#555">Page 1 of 1</text>
<path d="M846 524h3" stroke="#333" stroke-width="1.200"/><path d="M851.500 523.500h73.500" stroke="#333" stroke-width=".7"/><rect x="875.500" y="520" width="3" height="8" fill="#444"/><path d="M888.500 521.500v4" stroke="#444" stroke-width=".6"/><path d="M929 523.500h5.500M931.700 521v5.500" stroke="#223a60"/>
<text x="952.700" y="527" font-size="8.400" fill="#444" text-anchor="middle">71%</text>
<rect x="975.500" y="520" width="11" height="8" fill="none" stroke="#555"/><rect x="975" y="519.500" width="3" height="3" fill="#333"/><rect x="984" y="519.500" width="3" height="3" fill="#333"/><rect x="975" y="526" width="3" height="3" fill="#333"/><rect x="984" y="526" width="3" height="3" fill="#333"/>

<!-- taskbar -->
<rect y="532" width="1000" height="30" fill="#1c2b30"/>
<rect x="0" y="532" width="1000" height="1" fill="#0e1518"/>
<rect x="35" y="533" width="211" height="29" fill="#f2f2f2"/>
<circle cx="28" cy="536" r="27" fill="none" stroke="#cfe3b0" stroke-width="4" opacity=".6"/>
<circle cx="28" cy="536" r="25" fill="#2c5a2a" opacity=".2"/>
<g fill="#f0f0f0"><path d="M11 543l6-1v5h-6zM18 541.500l7-1v6.500h-7zM11 548h6v5l-6-1zM18 548h7v6.500l-7-1z"/></g>
<circle cx="51" cy="546" r="4" fill="none" stroke="#222" stroke-width="1"/><path d="M48 549l-3 3.500" stroke="#222" stroke-width="1.200"/>
<text x="64.500" y="552" font-size="10.400" fill="#222">Type here to search</text>
<!-- otter -->
<path d="M190 562c3-6 12-9 24-8 10 0 20 0 32-3v11z" fill="#2f9fd8"/><ellipse cx="216" cy="553" rx="20" ry="5.500" fill="#6b4a30" transform="rotate(-12 216 553)"/><ellipse cx="227" cy="545" rx="9" ry="8" fill="#7c5a3c"/><circle cx="226" cy="541" r="6.500" fill="#8a6a48"/><path d="M212 552l4-8 3 1-3 9z" fill="#5c3f28"/><circle cx="224" cy="541" r=".9" fill="#111"/><circle cx="229" cy="541" r=".9" fill="#111"/>
<circle cx="263.700" cy="547.500" r="4.500" fill="none" stroke="#fff" stroke-width="1.700"/>
<g fill="none" stroke="#fff" stroke-width="1.100"><rect x="293" y="543" width="8" height="9"/><path d="M304 542v11M292.500 540.500h9M292.500 554.500h9"/></g>
<circle cx="336" cy="547" r="9" fill="#1c8fd8"/><path d="M329 545c2-6 12-7 15-1 1 3-1 5-5 5-4 0-4-2-3-3-3 0-6 4-3 8 2 2 6 2 8 1-4 3-12 2-13-4 0-2 0-4 1-6z" fill="#44d36a"/>
<path d="M364 541h6l2 2h8v12h-16z" fill="#f4c64a"/><rect x="364" y="546" width="16" height="9" fill="#fbd45e"/><rect x="369" y="550" width="6" height="5" fill="#2a7fd4"/>
<rect x="357" y="560.500" width="30" height="1.500" fill="#7ac5ef"/>
<rect x="399.500" y="542" width="15" height="13" rx="1.500" fill="#f4f4f4"/><path d="M403 542c0-4 8-4 8 0" fill="none" stroke="#8fd0f0"/><rect x="404" y="546" width="2.500" height="2.500" fill="#e8452c"/><rect x="407.500" y="546" width="2.500" height="2.500" fill="#6cbb2c"/><rect x="404" y="549.500" width="2.500" height="2.500" fill="#1a8fdc"/><rect x="407.500" y="549.500" width="2.500" height="2.500" fill="#fbb415"/>
<rect x="435.500" y="543" width="17" height="12" fill="#2aa0e8"/><path d="M435.500 543l8.500 6 8.500-6v-1c-3-2-5-3-8.500-3s-5.500 1-8.500 3z" fill="#8fd6fb"/><path d="M435.500 555l8.500-6 8.500 6z" fill="#1577c8"/>
<circle cx="479.500" cy="547" r="8.700" fill="#fcc934"/><path d="M479.500 538.300a8.700 8.700 0 0 1 7.500 4.300h-8a4.500 4.500 0 0 0-4 2.500l-3.500-4a8.700 8.700 0 0 1 8-2.800z" fill="#e94235"/><path d="M471 541.500l4 6.800a4.500 4.500 0 0 0 4.500 3.200l-2 4.200a8.700 8.700 0 0 1-6.500-14.200z" fill="#34a853"/><circle cx="479.500" cy="547" r="3.600" fill="#4285f4" stroke="#fff"/>
<rect x="465" y="560.500" width="30" height="1.500" fill="#7ac5ef"/>
<circle cx="515" cy="546" r="7.500" fill="none" stroke="#2ad24e" stroke-width="1.700"/><path d="M509 552l-2 4 4-1z" fill="#2ad24e"/><path d="M512 543c0 3 2 5 5 6" fill="none" stroke="#2ad24e" stroke-width="1.600"/>
<rect x="512" y="547" width="21" height="12" rx="6" fill="#202b2f" stroke="#8a9094" stroke-width=".7"/><text x="522.500" y="556.500" font-size="8.500" font-weight="bold" fill="#eee" text-anchor="middle">99+</text>
<rect x="500" y="560.500" width="30" height="1.500" fill="#7ac5ef"/>
<circle cx="551" cy="547" r="8" fill="#2a9fdc"/><path d="M546 547l10-4-1.500 8-3-2-1.500 1.500-.5-3z" fill="#fff"/>
<rect x="569.300" y="532.500" width="35.700" height="29.500" fill="#48565b"/>
<rect x="580" y="547" width="4.500" height="9" fill="#f7d766"/><rect x="585" y="542" width="5" height="14" fill="#f2c811"/><rect x="590" y="538.500" width="4.500" height="17.500" fill="#d9a40a"/>
<rect x="569.300" y="560.500" width="35.700" height="1.500" fill="#7ac5ef"/>
<rect x="620" y="540" width="12" height="15" fill="#2b7cd3"/><rect x="620" y="540" width="12" height="4" fill="#41a5ee"/><rect x="620" y="549" width="12" height="6" fill="#185abd"/><rect x="614" y="543.500" width="10" height="9.500" fill="#103f91"/><text x="619" y="551.500" font-size="8" font-weight="bold" fill="#fff" text-anchor="middle">W</text>
<rect x="608" y="560.500" width="30" height="1.500" fill="#7ac5ef"/>
<rect x="651" y="539.500" width="16" height="16" rx="1.500" fill="#6a3fd0"/><path d="M651 555l7-9 9 9z" fill="#38c8f0"/><path d="M656 555l6-7 5 7z" fill="#7ae0f8"/><circle cx="663" cy="544" r="2" fill="#f4a8c0"/>
<rect x="644" y="560.500" width="30" height="1.500" fill="#7ac5ef"/>
<circle cx="739" cy="547.500" r="7.700" fill="url(#sun)"/>
<text x="765" y="551.500" font-size="9.500" fill="#eee" text-anchor="middle">38°C</text>
<path d="M797.500 549l4-4 4 4" fill="none" stroke="#eee" stroke-width="1.100"/>
<g fill="none" stroke="#ddd" stroke-width=".9"><path d="M819 545h3l3-3v11l-3-3h-3zM827 545c1 1 1 4 0 5M829 543c2 2 2 7 0 9"/><rect x="845" y="544" width="9" height="7"/><path d="M844 545l-2-2M844 548h-2M847 546l3 3M850 546l-3 3"/><path d="M868 552a7 7 0 0 1 9-8M870 552a4.500 4.500 0 0 1 6-5M872 552a2 2 0 0 1 2-2"/></g>
<text x="896.700" y="551.500" font-size="8.200" fill="#e8e8e8" text-anchor="middle">ENG</text>
<text x="935.700" y="543" font-size="8.600" fill="#eee" text-anchor="middle">12:06 PM</text>
<text x="935.700" y="556" font-size="8.600" fill="#eee" text-anchor="middle">05/28/2025</text>
<path d="M970.500 541.500h12v8.500h-5l-3 3v-3h-4z" fill="#f0f0f0"/><path d="M973 544h7M973 546.500h7" stroke="#444" stroke-width=".6"/>
<circle cx="981" cy="553" r="5.500" fill="#202b2f" stroke="#aaa" stroke-width=".6"/><text x="981" y="556" font-size="7.500" fill="#fff" text-anchor="middle" font-weight="bold">11</text>
<rect x="996" y="533" width="1" height="29" fill="#5a6468"/>
</svg>
</body></html>
